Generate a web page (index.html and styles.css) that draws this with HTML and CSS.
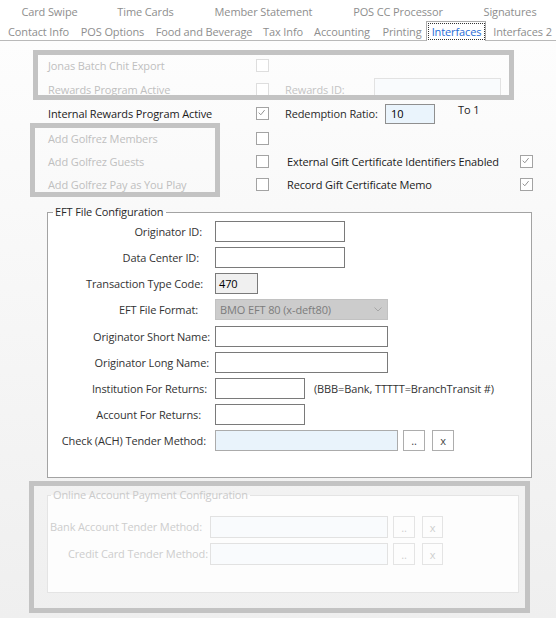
FILE: index.html
```html
<!DOCTYPE html>
<html>
<head>
<meta charset="utf-8">
<title>Interfaces</title>
<link rel="stylesheet" href="styles.css">
</head>
<body>
<div class="app">
  <div class="tabstrip">
    <div class="tabrow row1">
      <span class="tab">Card Swipe</span>
      <span class="tab">Time Cards</span>
      <span class="tab">Member Statement</span>
      <span class="tab">POS CC Processor</span>
      <span class="tab">Signatures</span>
    </div>
    <div class="tabrow row2">
      <span class="tab">Contact Info</span>
      <span class="tab">POS Options</span>
      <span class="tab">Food and Beverage</span>
      <span class="tab">Tax Info</span>
      <span class="tab">Accounting</span>
      <span class="tab">Printing</span>
      <span class="tab active"><span class="focus">Interfaces</span></span>
      <span class="tab">Interfaces 2</span>
    </div>
  </div>

  <div class="page">
    <div class="toprows">
      <div class="trow h23">
        <span class="lbl dis">Jonas Batch Chit Export</span>
        <span class="cb dis"></span>
      </div>
      <div class="trow h24">
        <span class="lbl dis">Rewards Program Active</span>
        <span class="cb dis"></span>
        <span class="rside">
          <span class="rlabel w89 dis">Rewards ID:</span>
          <span class="tb tb-dis w127 h22"></span>
        </span>
      </div>
      <div class="trow h25">
        <span class="lbl">Internal Rewards Program Active</span>
        <span class="cb checked"><svg viewBox="0 0 13 13" width="11" height="11"><path d="M2 5.5 L4.5 8 L9 2.5" fill="none" stroke="#8a8a8a" stroke-width="1.1"/></svg></span>
        <span class="rside">
          <span class="rlabel w100">Redemption Ratio:</span>
          <span class="tb tb-blue w50 h20">10</span>
          <span class="to1">To 1</span>
        </span>
      </div>
      <div class="trow h24">
        <span class="lbl dis">Add Golfrez Members</span>
        <span class="cb"></span>
      </div>
      <div class="trow h23">
        <span class="lbl dis">Add Golfrez Guests</span>
        <span class="cb"></span>
        <span class="rside gift">External Gift Certificate Identifiers Enabled</span>
        <span class="cb checked"><svg viewBox="0 0 13 13" width="11" height="11"><path d="M2 5.5 L4.5 8 L9 2.5" fill="none" stroke="#8a8a8a" stroke-width="1.1"/></svg></span>
      </div>
      <div class="trow h23">
        <span class="lbl dis">Add Golfrez Pay as You Play</span>
        <span class="cb"></span>
        <span class="rside gift">Record Gift Certificate Memo</span>
        <span class="cb checked"><svg viewBox="0 0 13 13" width="11" height="11"><path d="M2 5.5 L4.5 8 L9 2.5" fill="none" stroke="#8a8a8a" stroke-width="1.1"/></svg></span>
      </div>
    </div>

    <fieldset class="group eft">
      <legend>EFT File Configuration</legend>
      <div class="fgrid">
        <span class="fl pr8">Originator ID:</span>
        <span class="fc"><span class="tb w130"></span></span>

        <span class="fl pr11">Data Center ID:</span>
        <span class="fc"><span class="tb w130"></span></span>

        <span class="fl pr7">Transaction Type Code:</span>
        <span class="fc"><span class="tb tb-gray w43">470</span></span>

        <span class="fl pr12">EFT File Format:</span>
        <span class="fc"><span class="sel w173"><span class="seltext">BMO EFT 80 (x-deft80)</span><svg class="chev" viewBox="0 0 8 5" width="8" height="5"><path d="M0.5 0.5 L4 4 L7.5 0.5" fill="none" stroke="#a6a6a6" stroke-width="1"/></svg></span></span>

        <span class="fl pr0">Originator Short Name:</span>
        <span class="fc"><span class="tb w173"></span></span>

        <span class="fl pr1">Originator Long Name:</span>
        <span class="fc"><span class="tb w173"></span></span>

        <span class="fl pr3">Institution For Returns:</span>
        <span class="fc"><span class="tb w90"></span><span class="note">(BBB=Bank, TTTTT=BranchTransit #)</span></span>

        <span class="fl pr9">Account For Returns:</span>
        <span class="fc"><span class="tb w90"></span></span>

        <span class="fl pr4">Check (ACH) Tender Method:</span>
        <span class="fc"><span class="tb tb-lblue w183"></span><span class="btn b1">..</span><span class="btn b2">x</span></span>
      </div>
    </fieldset>

    <fieldset class="group online">
      <legend>Online Account Payment Configuration</legend>
      <div class="ogrid">
        <span class="ol pr6">Bank Account Tender Method:</span>
        <span class="fc"><span class="tb tb-dis w178 h22"></span><span class="btn dis b1o">..</span><span class="btn dis b2o">x</span></span>

        <span class="ol pr0">Credit Card Tender Method:</span>
        <span class="fc"><span class="tb tb-dis w178 h22"></span><span class="btn dis b1o">..</span><span class="btn dis b2o">x</span></span>
      </div>
    </fieldset>
  </div>

  <div class="frame f1"></div>
  <div class="frame f2"></div>
  <div class="frame f3"></div>
</div>
</body>
</html>
```
FILE: styles.css
```css
* { box-sizing: border-box; }
html, body { margin: 0; padding: 0; }
body {
  width: 556px;
  height: 618px;
  overflow: hidden;
  font-family: "Open Sans", "Noto Sans", sans-serif;
  font-size: 11px;
  letter-spacing: -0.12px;
  color: #222;
  background: #fff;
}
.app { position: relative; width: 556px; height: 618px; overflow: hidden; }

/* tabs */
.tabstrip {
  height: 41px;
  padding-top: 2px;
  border-bottom: 1px solid #b9b9b9;
  background: #fff;
}
.tabrow { display: grid; white-space: nowrap; }
.row1 {
  grid-template-columns: 95px 97px 139px 130px 94px;
  height: 20px;
  line-height: 20px;
  padding-left: 2px;
}
.row2 {
  grid-template-columns: 77px 71px 112px 46px 72px 48px 60px 73px;
  grid-template-rows: 18px;
  line-height: 20px;
}
.tab { text-align: center; color: #8e8e8e; }
.tab.active {
  position: relative;
  z-index: 1;
  display: flex;
  height: 20px;
  margin-top: -1px;
  padding: 1px 0 1px 1px;
  background: #fff;
  border: 1px solid #acacac;
  border-bottom: 0;
  color: #1f6bd6;
  line-height: 16px;
}
.focus {
  flex: 1;
  display: flex;
  align-items: center;
  justify-content: center;
  padding-top: 1px;
  border: 1px dotted #333;
}

/* page */
.page {
  height: 577px;
  padding-top: 13px;
  background: linear-gradient(#fdfdfd, #efefef);
}
.toprows { margin-left: 48px; }
.trow {
  display: grid;
  grid-template-columns: 208px 13px 251px 13px;
  align-items: center;
  white-space: nowrap;
}
.h23 { height: 23px; }
.h24 { height: 24px; }
.h25 { height: 25px; }
.lbl { color: #1b1b1b; }
.dis { color: #bfbfbf; }
.cb {
  width: 13px;
  height: 13px;
  border: 1px solid #a3a3a3;
  background: #fff;
  display: flex;
  align-items: center;
  justify-content: center;
}
.cb.dis { border-color: #dedede; }
.rside { display: flex; align-items: center; padding-left: 16px; height: 100%; }
.rside.gift { padding-left: 18px; color: #1b1b1b; }
.rlabel { flex: none; color: #2a2a2a; }
.rlabel.dis { color: #c4c4c4; }
.w89 { width: 89px; }
.w100 { width: 100px; }
.to1 { align-self: flex-start; margin-left: 23px; line-height: 18px; color: #222; }

.tb {
  display: flex;
  align-items: center;
  flex: none;
  height: 21px;
  padding: 0 4px;
  border: 1px solid #7a7a7a;
  background: #fff;
  color: #000;
}
.tb-dis { border-color: #e2e2e2; background: #f9fbfd; }
.tb-blue { border-color: #8f8f8f; background: #eaf4fc; padding-left: 5px; }
.tb-gray { background: #f0f0f0; padding-left: 3px; }
.tb-lblue { border-color: #ababab; background: #e9f3fb; }
.h20 { height: 20px; }
.h22 { height: 22px; }
.w43 { width: 43px; }
.w50 { width: 50px; }
.w90 { width: 90px; }
.w127 { width: 127px; }
.w130 { width: 130px; }
.w173 { width: 173px; }
.w178 { width: 178px; }
.w183 { width: 183px; }

/* group boxes */
.group {
  margin: 8px 0 0 47px;
  padding: 0;
  min-width: 0;
  border: 1px solid #a3a3a3;
}
.group legend { padding: 0 2px; line-height: 16px; }
.eft { width: 485px; height: 274px; background: #fff; }
.eft legend { margin-left: 5px; color: #2a2a2a; }
.online {
  margin-top: 9px;
  width: 472px;
  height: 106px;
  border-color: #e4e4e4;
  background: #fdfdfd;
}
.online legend { margin-left: 3px; color: #cacaca; }

.fgrid {
  display: grid;
  grid-template-columns: 162px auto;
  grid-template-rows: 26px 26px 26px 27px 26px 26px 26px 26px 26px;
  column-gap: 5px;
  align-items: start;
  margin-top: 1px;
}
.fl, .ol {
  line-height: 21px;
  text-align: right;
  white-space: nowrap;
  color: #333;
}
.fc { display: flex; align-items: center; white-space: nowrap; }
.pr0 { padding-right: 0; }
.pr1 { padding-right: 1px; }
.pr3 { padding-right: 3px; }
.pr4 { padding-right: 4px; }
.pr6 { padding-right: 6px; }
.pr7 { padding-right: 7px; }
.pr8 { padding-right: 8px; }
.pr9 { padding-right: 9px; }
.pr11 { padding-right: 11px; }
.pr12 { padding-right: 12px; }

.sel {
  display: flex;
  align-items: center;
  justify-content: space-between;
  height: 21px;
  padding: 0 5px 0 4px;
  background: #cccccc;
  border: 1px solid #c2c2c2;
  color: #7c7c7c;
}
.chev { flex: none; }
.note { margin-left: 9px; color: #333; }

.btn {
  display: flex;
  align-items: center;
  justify-content: center;
  flex: none;
  width: 22px;
  height: 21px;
  border: 1px solid #adadad;
  background: #fff;
  color: #444;
}
.b1 { margin-left: 5px; }
.b2 { margin-left: 7px; }
.btn.dis { border-color: #e4e4e4; background: #fdfdfd; color: #cfcfcf; height: 22px; }
.b1o { margin-left: 5px; }
.b2o { margin-left: 7px; width: 21px; }

.ogrid {
  display: grid;
  grid-template-columns: 160px auto;
  grid-template-rows: 27px 27px;
  column-gap: 2px;
  align-items: start;
  margin-top: 13px;
}
.ol { line-height: 22px; color: #cdcdcd; }

/* highlight frames drawn over the form */
.frame {
  position: absolute;
  border: 5px solid #c3c3c3;
  pointer-events: none;
}
.f1 { left: 33px; top: 50px; width: 481px; height: 50px; }
.f2 { left: 30px; top: 123px; width: 190px; height: 74px; }
.f3 { left: 29px; top: 481px; width: 501px; height: 132px; }
```
